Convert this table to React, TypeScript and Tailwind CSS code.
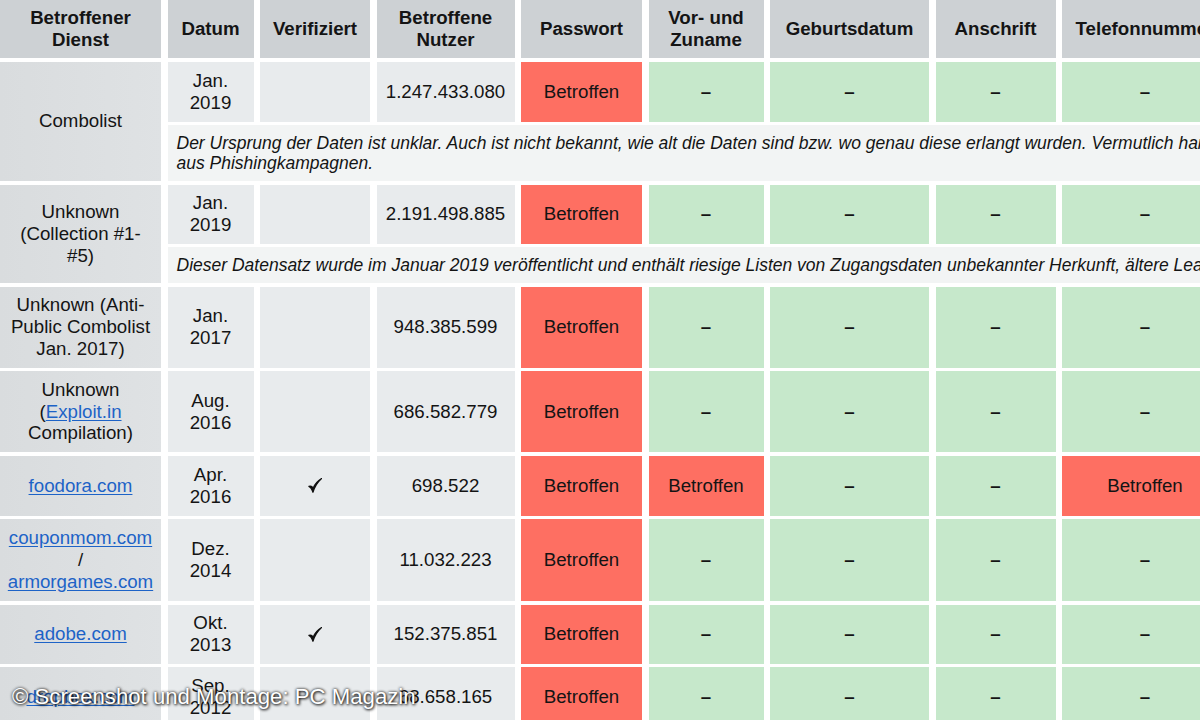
import type { ReactNode } from 'react';

type Mark = 'B' | '-';

interface LeakRow {
    name: ReactNode;
    date: [string, string];
    verified?: boolean;
    users: string;
    marks: Mark[];
    desc?: ReactNode;
}

function Link({ children }: { children: ReactNode }) {
    return <span className="text-[#1d63c7] underline underline-offset-2">{children}</span>;
}

function Check() {
    return (
        <svg width="14" height="17" viewBox="0 0 13 15" aria-hidden="true">
            <path d="M0.8 8.3 Q3 9.2 4.6 13.8 Q7 6 12.6 1 Q7.2 4.2 4.7 10 Q3.5 7.4 0.8 8.3 Z" fill="#111" stroke="#111" strokeWidth="1.1" strokeLinejoin="round" />
        </svg>
    );
}

const rows: LeakRow[] = [
    {
        name: 'Combolist',
        date: ['Jan.', '2019'],
        users: '1.247.433.080',
        marks: ['B', '-', '-', '-', '-'],
        desc: (
            <>
                Der Ursprung der Daten ist unklar. Auch ist nicht bekannt, wie alt die Daten sind bzw. wo genau diese erlangt wurden. Vermutlich handelt es sich um Daten
                <br />
                aus Phishingkampagnen.
            </>
        ),
    },
    {
        name: (
            <>
                Unknown
                <br />
                (Collection #1-
                <br />
                #5)
            </>
        ),
        date: ['Jan.', '2019'],
        users: '2.191.498.885',
        marks: ['B', '-', '-', '-', '-'],
        desc: 'Dieser Datensatz wurde im Januar 2019 veröffentlicht und enthält riesige Listen von Zugangsdaten unbekannter Herkunft, ältere Leaks und mehr.',
    },
    {
        name: (
            <>
                Unknown (Anti-
                <br />
                Public Combolist
                <br />
                Jan. 2017)
            </>
        ),
        date: ['Jan.', '2017'],
        users: '948.385.599',
        marks: ['B', '-', '-', '-', '-'],
    },
    {
        name: (
            <>
                Unknown
                <br />(<Link>Exploit.in</Link>
                <br />
                Compilation)
            </>
        ),
        date: ['Aug.', '2016'],
        users: '686.582.779',
        marks: ['B', '-', '-', '-', '-'],
    },
    {
        name: <Link>foodora.com</Link>,
        date: ['Apr.', '2016'],
        verified: true,
        users: '698.522',
        marks: ['B', 'B', '-', '-', 'B'],
    },
    {
        name: (
            <>
                <Link>couponmom.com</Link>
                <br />/<br />
                <Link>armorgames.com</Link>
            </>
        ),
        date: ['Dez.', '2014'],
        users: '11.032.223',
        marks: ['B', '-', '-', '-', '-'],
    },
    {
        name: <Link>adobe.com</Link>,
        date: ['Okt.', '2013'],
        verified: true,
        users: '152.375.851',
        marks: ['B', '-', '-', '-', '-'],
    },
    {
        name: <Link>dropbox.com</Link>,
        date: ['Sep.', '2012'],
        users: '68.658.165',
        marks: ['B', '-', '-', '-', '-'],
    },
];

const headers: ReactNode[] = [
    <>
        Betroffener
        <br />
        Dienst
    </>,
    'Datum',
    'Verifiziert',
    <>
        Betroffene
        <br />
        Nutzer
    </>,
    'Passwort',
    <>
        Vor- und
        <br />
        Zuname
    </>,
    'Geburtsdatum',
    'Anschrift',
    'Telefonnummer',
];

const cell = 'flex items-center justify-center text-center';

export default function App() {
    return (
        <div className="relative h-[720px] w-[1200px] overflow-hidden bg-white font-['Liberation_Sans',Arial,sans-serif] text-[18.7px] leading-[21.7px] text-[#141414]">
            <div className="grid grid-cols-[161px_86px_110px_138px_121px_115px_159px_120px_166px] grid-rows-[58px_60px_56px_59px_36px_81px_81px_60px_82px_59px_60px] gap-x-[6.5px] gap-y-[3.5px]">
                {headers.map((h, i) => (
                    <div key={i} className={`${cell} bg-[#cdd1d4] font-bold leading-[22px]`}>
                        <span className="whitespace-nowrap">{h}</span>
                    </div>
                ))}

                {rows.map((r, i) => (
                    <div key={i} className="contents">
                        <div
                            className={`${cell} bg-gradient-to-r from-[#d9dcde] to-[#dfe2e4] px-1 ${r.desc ? 'row-span-2' : ''}`}
                        >
                            <span className="whitespace-nowrap">{r.name}</span>
                        </div>
                        <div className={`${cell} bg-[#e8ebed]`}>
                            <span>
                                {r.date[0]}
                                <br />
                                {r.date[1]}
                            </span>
                        </div>
                        <div className={`${cell} bg-[#e8ebed]`}>{r.verified && <Check />}</div>
                        <div className={`${cell} bg-[#e8ebed]`}>{r.users}</div>
                        {r.marks.map((m, j) =>
                            m === 'B' ? (
                                <div key={j} className={`${cell} bg-[#fe6f62]`}>
                                    Betroffen
                                </div>
                            ) : (
                                <div key={j} className={`${cell} bg-[#c6e8cb] font-bold`}>
                                    –
                                </div>
                            ),
                        )}
                        {r.desc && (
                            <div className="col-span-8 flex items-center bg-[#f2f4f4] pl-[9px] text-[17.5px] leading-[20px] italic">
                                <p className="whitespace-nowrap">{r.desc}</p>
                            </div>
                        )}
                    </div>
                ))}
            </div>

            <div className="absolute top-[686px] left-[12px] font-['Liberation_Sans',Arial,sans-serif] text-[22.2px] leading-none whitespace-nowrap text-white [text-shadow:0_0_3px_rgba(0,0,0,0.95),1px_1px_3px_rgba(0,0,0,0.85)]">
                © Screenshot und Montage: PC Magazin
            </div>
        </div>
    );
}
